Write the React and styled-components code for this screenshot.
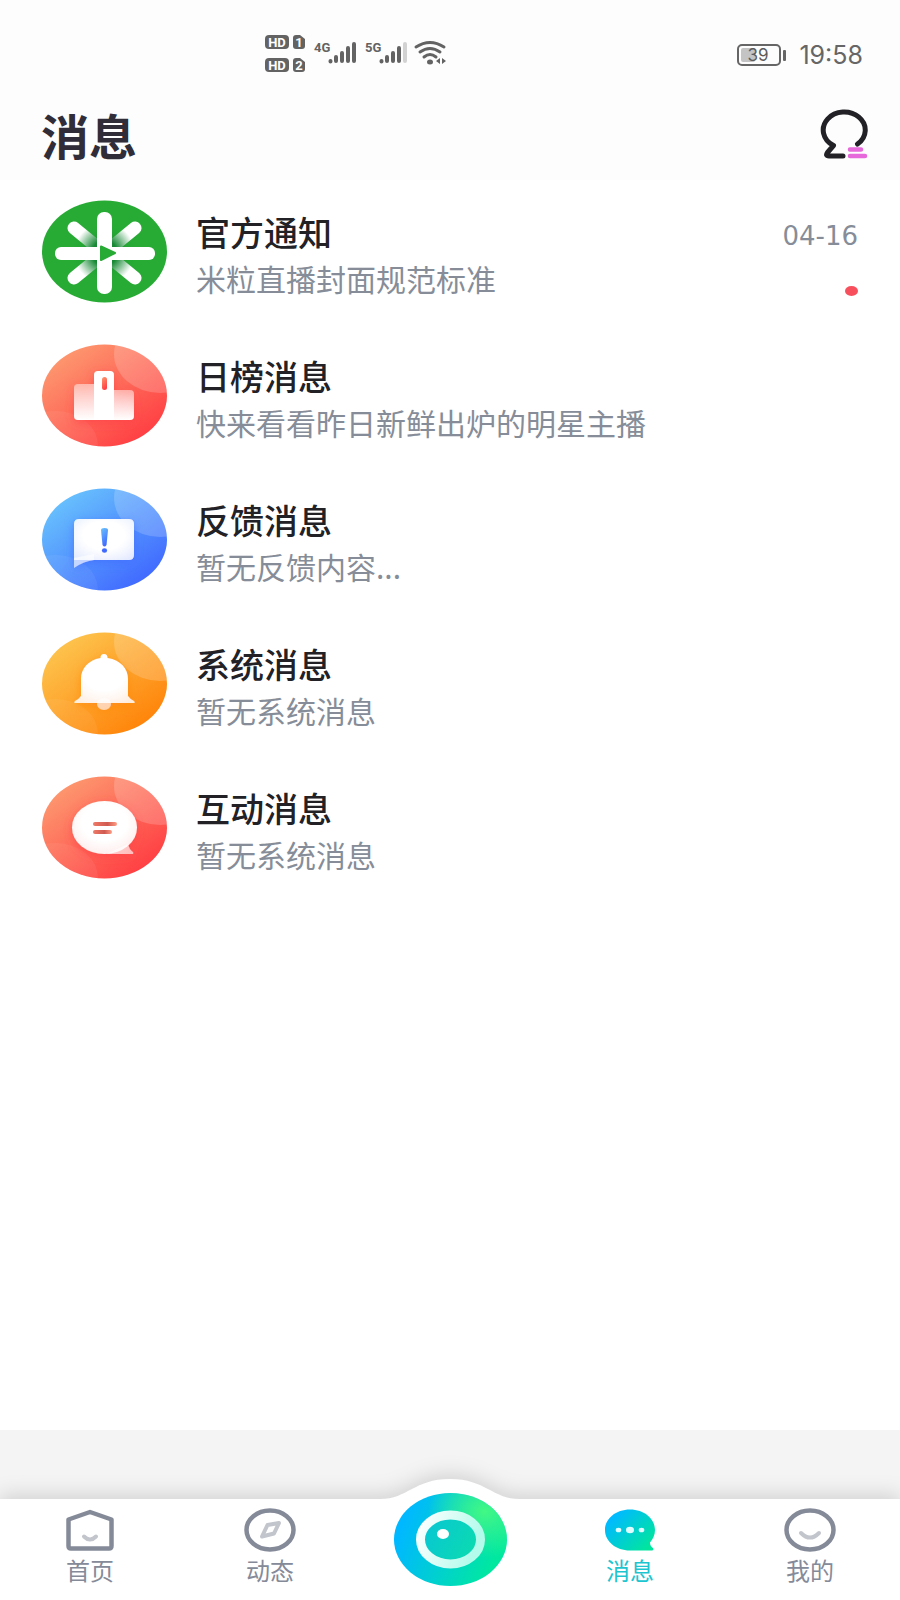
import React from "react";
import styled, { createGlobalStyle } from "styled-components";

export default function App() {
  return (
    <>
      <GlobalStyle />
      <Page>
        <Top>
          <StatusBar>
            <SignalIcons />
            <StatusRight>
              <Battery level={39} />
              <Clock>19:58</Clock>
            </StatusRight>
          </StatusBar>
          <Header>
            <Title>消息</Title>
            <IconButton type="button" aria-label="联系人">
              <ContactIcon />
            </IconButton>
          </Header>
        </Top>
        <List>
          {messages.map((item) => (
            <li key={item.title}>
              <Row href="#">
                <Avatar viewBox="0 0 125 103" aria-hidden="true">
                  {item.icon}
                </Avatar>
                <RowText>
                  <RowTitle>{item.title}</RowTitle>
                  <RowDesc>{item.desc}</RowDesc>
                </RowText>
                {item.date && (
                  <RowMeta>
                    <RowDate>{item.date}</RowDate>
                    <UnreadDot />
                  </RowMeta>
                )}
              </Row>
            </li>
          ))}
        </List>
        <Strip />
        <TabBar>
          <Bump viewBox="0 0 140 21" aria-hidden="true">
            <path d="M0 21V20C28 20 34 0 70 0C106 0 112 20 140 20V21Z" fill="#fff" />
          </Bump>
          <Tab href="#">
            <HomeIcon />
            首页
          </Tab>
          <Tab href="#">
            <CompassIcon />
            动态
          </Tab>
          <LiveButton type="button" aria-label="直播">
            <LiveIcon />
          </LiveButton>
          <Tab href="#" $active aria-current="page">
            <ChatIcon />
            消息
          </Tab>
          <Tab href="#">
            <FaceIcon />
            我的
          </Tab>
        </TabBar>
      </Page>
    </>
  );
}

function SignalIcons() {
  return (
    <Signals viewBox="0 0 186 44" aria-hidden="true">
      <g fill="#636363">
        <rect x="1" y="2" width="24" height="14" rx="4" />
        <path d="M32 2H36L41 6V13Q41 16 38 16H32Q29 16 29 13V5Q29 2 32 2Z" />
        <rect x="1" y="25" width="24" height="14" rx="4" />
        <path d="M32 25H36L41 29V36Q41 39 38 39H32Q29 39 29 36V28Q29 25 32 25Z" />
        <g fontFamily="Roboto, sans-serif" fontWeight="700" fontSize="13">
          <text x="50" y="19">4G</text>
          <text x="101" y="19">5G</text>
        </g>
      </g>
      <g
        fill="#fff"
        fontFamily="Roboto, sans-serif"
        fontWeight="700"
        fontSize="13"
        textAnchor="middle"
      >
        <text x="13" y="14">HD</text>
        <text x="35" y="14">1</text>
        <text x="13" y="37">HD</text>
        <text x="35" y="37">2</text>
      </g>
      <g stroke="#636363" strokeWidth="4" strokeLinecap="round">
        <path d="M66.500 28V28.500M72 24V28M78 20V28M84 15V28M90 11V28" />
        <path d="M117.500 28V28.500M123 24V28M129 20V28M135 15V28" />
        <path d="M141 11V28" stroke="#d2d2d2" />
      </g>
      <g fill="none" stroke="#636363" strokeWidth="3" strokeLinecap="round">
        <path d="M152 14Q166 5 180 14" />
        <path d="M156 19Q166 12 176 19" />
        <path d="M160 24Q166 19 172 24" />
      </g>
      <ellipse cx="166" cy="29" rx="3" ry="2.500" fill="#636363" />
      <path d="M172 28L176 25V31ZM182 28L178 25V31Z" fill="#636363" />
    </Signals>
  );
}

function Battery({ level }) {
  return (
    <BatterySvg viewBox="0 0 50 22" role="img" aria-label={`${level}%`}>
      <rect x="1" y="1" width="42" height="20" rx="4" fill="none" stroke="#666" strokeWidth="2" />
      <rect x="4" y="4" width={(36 * level) / 100} height="14" rx="2" fill="#c4c4c4" />
      <rect x="46" y="6" width="3" height="11" rx="1" fill="#666" />
      <text
        x="21"
        y="17"
        textAnchor="middle"
        fontFamily="Inter, sans-serif"
        fontSize="17"
        fill="#5c5c5c"
      >
        {level}
      </text>
    </BatterySvg>
  );
}

function ContactIcon() {
  return (
    <svg width="50" height="50" viewBox="0 0 50 50" fill="none" strokeLinecap="round">
      <path
        d="M38.500 35A21 18 0 1 0 14.500 36.500L8.500 43.500Q6 47 10 47H24"
        stroke="#222126"
        strokeWidth="5"
        strokeLinejoin="round"
      />
      <path d="M31 40.500H42M31 47H46" stroke="#e668da" strokeWidth="4.500" />
    </svg>
  );
}

// Coloured oval with the two pale bubbles shared by most rows
function Badge({ id, from, to, children }) {
  return (
    <>
      <defs>
        <linearGradient id={`${id}-bg`} x1="0.1" y1="0.1" x2="0.8" y2="0.9">
          <stop offset="0" stopColor={from} />
          <stop offset="1" stopColor={to} />
        </linearGradient>
        <linearGradient id={`${id}-fade`} x1="0" y1="0" x2="0" y2="1">
          <stop offset="0" stopColor="#fff" stopOpacity="0.45" />
          <stop offset="1" stopColor="#fff" />
        </linearGradient>
        <linearGradient id={`${id}-mark`} x1="0" y1="0" x2="0.4" y2="1">
          <stop offset="0" stopColor={from} />
          <stop offset="1" stopColor={to} />
        </linearGradient>
        <radialGradient id={`${id}-glow`} cx="0.5" cy="0.4" r="0.7">
          <stop offset="0.5" stopColor="#fff" />
          <stop offset="1" stopColor="#fff" stopOpacity="0.82" />
        </radialGradient>
        <clipPath id={`${id}-clip`}>
          <ellipse cx="62.500" cy="51.500" rx="62.500" ry="51" />
        </clipPath>
        <filter id={`${id}-shadow`} x="-30%" y="-30%" width="160%" height="160%">
          <feDropShadow dx="0" dy="3" stdDeviation="5" floodColor={to} floodOpacity="0.7" />
        </filter>
      </defs>
      <g clipPath={`url(#${id}-clip)`}>
        <rect width="125" height="103" fill={`url(#${id}-bg)`} />
        <ellipse cx="118" cy="10" rx="46" ry="39" fill="#fff" opacity="0.18" />
        <ellipse cx="14" cy="102" rx="42" ry="35" fill="#fff" opacity="0.06" />
      </g>
      <g filter={`url(#${id}-shadow)`}>{children}</g>
    </>
  );
}

const officialIcon = (
  <>
    <defs>
      <radialGradient id="rice" gradientUnits="userSpaceOnUse" cx="62.500" cy="53" r="42">
        <stop offset="0.3" stopColor="#188a35" />
        <stop offset="0.72" stopColor="#fff" />
      </radialGradient>
      <radialGradient id="rice-shade">
        <stop offset="0.3" stopColor="#107a2a" stopOpacity="0.7" />
        <stop offset="1" stopColor="#27ab35" stopOpacity="0" />
      </radialGradient>
    </defs>
    <ellipse cx="62.500" cy="51.500" rx="62.500" ry="51" fill="#27ab35" />
    <ellipse cx="62.500" cy="53" rx="34" ry="29" fill="url(#rice-shade)" />
    <path
      d="M32 28L93 78M93 28L32 78"
      stroke="url(#rice)"
      strokeWidth="13"
      strokeLinecap="round"
    />
    <rect x="55" y="12" width="15" height="82" rx="7" fill="#fff" />
    <rect x="13" y="47" width="100" height="13" rx="6" fill="#fff" />
    <path
      d="M59 46.500L73 53L59 60Z"
      fill="#27ab35"
      stroke="#27ab35"
      strokeWidth="2"
      strokeLinejoin="round"
    />
  </>
);

const rankIcon = (
  <Badge id="rank" from="#fd9b71" to="#ff4044">
    <path d="M36 40H53V76H36Q32 76 32 72V44Q32 40 36 40Z" fill="url(#rank-fade)" />
    <path d="M71 46H88Q92 46 92 50V72Q92 76 88 76H71Z" fill="url(#rank-fade)" />
    <path d="M56 27H68Q72 27 72 31V76H52V31Q52 27 56 27Z" fill="#fff" />
    <rect x="60" y="33" width="5" height="13" rx="2.500" fill="url(#rank-mark)" />
  </Badge>
);

const feedbackIcon = (
  <Badge id="feedback" from="#69c4fd" to="#416bff">
    <path d="M32 70V80Q42 73 52 72V66Z" fill="#fff" opacity="0.6" />
    <path
      d="M37 31H87Q92 31 92 36V67Q92 72 87 72H32V36Q32 31 37 31Z"
      fill="url(#feedback-glow)"
    />
    <path
      d="M59 42Q59 40 62.500 40Q66 40 66 42L64.500 57Q62.500 60 60.500 57Z"
      fill="url(#feedback-mark)"
    />
    <ellipse cx="62.500" cy="62.500" rx="2.600" ry="2.200" fill="#416bff" />
  </Badge>
);

const systemIcon = (
  <Badge id="system" from="#fdc650" to="#ff850b">
    <ellipse cx="62" cy="72" rx="7" ry="6" fill="#fff" opacity="0.55" />
    <path
      d="M58.500 26Q58.500 22 62 22Q65.500 22 65.500 26C79 28 86 37 86 47V64Q88 67 92 69Q94 71 91 71H34Q31 71 33 69Q37 67 39 64V47C39 37 46 28 58.500 26Z"
      fill="url(#system-glow)"
    />
  </Badge>
);

const interactIcon = (
  <Badge id="interact" from="#fd9b71" to="#ff4044">
    <path d="M86 68Q87 73 91 76Q92 78 90 78H64Z" fill="#fff" opacity="0.6" />
    <ellipse cx="62.500" cy="51.500" rx="32.500" ry="26.500" fill="url(#interact-glow)" />
    <rect x="51" y="46" width="24" height="4" rx="2" fill="url(#interact-line)" />
    <rect x="51" y="54" width="19" height="4" rx="2" fill="url(#interact-line)" />
    <defs>
      <linearGradient id="interact-line">
        <stop offset="0" stopColor="#f07a68" />
        <stop offset="0.6" stopColor="#cf5a50" />
        <stop offset="1" stopColor="#ff9c84" />
      </linearGradient>
    </defs>
  </Badge>
);

const messages = [
  { title: "官方通知", desc: "米粒直播封面规范标准", date: "04-16", icon: officialIcon },
  { title: "日榜消息", desc: "快来看看昨日新鲜出炉的明星主播", icon: rankIcon },
  { title: "反馈消息", desc: "暂无反馈内容...", icon: feedbackIcon },
  { title: "系统消息", desc: "暂无系统消息", icon: systemIcon },
  { title: "互动消息", desc: "暂无系统消息", icon: interactIcon },
];

function HomeIcon() {
  return (
    <TabIcon viewBox="0 0 52 44">
      <path
        d="M4.500 11.500L26 4L47.500 11.500V38Q47.500 40.500 45 40.500H7Q4.500 40.500 4.500 38Z"
        stroke="#858a99"
        strokeWidth="4.500"
        strokeLinejoin="round"
      />
      <path d="M20 28.500Q26 34.500 32 28.500" stroke="#c2c5cc" strokeWidth="4" strokeLinecap="round" />
    </TabIcon>
  );
}

function CompassIcon() {
  return (
    <TabIcon viewBox="0 0 52 44">
      <ellipse cx="26" cy="22" rx="23.500" ry="19.500" stroke="#858a99" strokeWidth="4.500" />
      <path
        d="M23.500 17L35 15L30 25.500L18 28.500Z"
        stroke="#c2c5cc"
        strokeWidth="4"
        strokeLinejoin="round"
      />
    </TabIcon>
  );
}

function ChatIcon() {
  return (
    <TabIcon viewBox="0 0 52 44">
      <defs>
        <linearGradient id="chat-tab" x1="0" y1="0.2" x2="0.9" y2="0.9">
          <stop offset="0.1" stopColor="#00baff" />
          <stop offset="1" stopColor="#00e69c" />
        </linearGradient>
      </defs>
      <path
        d="M26 1.500C40 1.500 51 10.500 51 22C51 27 49 31 46 34.500Q46 38 49 40Q50 42.500 48 42.500H26C12 42.500 1 33.500 1 22C1 10.500 12 1.500 26 1.500Z"
        fill="url(#chat-tab)"
      />
      <ellipse cx="14.500" cy="22" rx="2.800" ry="2.300" fill="#dffcff" />
      <ellipse cx="26" cy="22" rx="4" ry="3.300" fill="#dffcff" />
      <ellipse cx="37.500" cy="22" rx="2.800" ry="2.300" fill="#dffcff" />
    </TabIcon>
  );
}

function FaceIcon() {
  return (
    <TabIcon viewBox="0 0 52 44">
      <ellipse cx="26" cy="22" rx="23.500" ry="19.500" stroke="#858a99" strokeWidth="4.500" />
      <path d="M17 25Q26 34 35 25" stroke="#c2c5cc" strokeWidth="4" strokeLinecap="round" />
    </TabIcon>
  );
}

function LiveIcon() {
  return (
    <svg width="113" height="93" viewBox="0 0 113 93" aria-hidden="true">
      <defs>
        <linearGradient id="live-base" x1="0" y1="0.4" x2="1" y2="0.7">
          <stop offset="0.05" stopColor="#00b8ff" />
          <stop offset="0.9" stopColor="#00e8a0" />
        </linearGradient>
        <radialGradient id="live-green" cx="0.8" cy="0.2" r="0.5">
          <stop offset="0" stopColor="#42f884" />
          <stop offset="1" stopColor="#42f884" stopOpacity="0" />
        </radialGradient>
        <linearGradient id="live-ring" x1="0" y1="0" x2="1" y2="0.3">
          <stop offset="0" stopColor="#fff" />
          <stop offset="1" stopColor="#b5fbec" />
        </linearGradient>
        <linearGradient id="live-lens" x1="0" y1="0.3" x2="1" y2="0.7">
          <stop offset="0" stopColor="#08c6d4" />
          <stop offset="1" stopColor="#0bdcae" />
        </linearGradient>
      </defs>
      <ellipse cx="56.500" cy="46.500" rx="56.500" ry="46.500" fill="url(#live-base)" />
      <ellipse cx="56.500" cy="46.500" rx="56.500" ry="46.500" fill="url(#live-green)" />
      <ellipse
        cx="56.500"
        cy="46.500"
        rx="30"
        ry="24.500"
        fill="url(#live-lens)"
        stroke="url(#live-ring)"
        strokeWidth="9"
      />
      <ellipse cx="49" cy="41" rx="6" ry="5" fill="#fff" />
    </svg>
  );
}

const GlobalStyle = createGlobalStyle`
  * {
    box-sizing: border-box;
  }

  body {
    margin: 0;
    background: #fff;
    font-family: "Noto Sans CJK SC", sans-serif;
  }
`;

const Page = styled.div`
  display: flex;
  flex-direction: column;
  min-height: 100vh;
  overflow: hidden;
`;

const Top = styled.header`
  background: #fdfdfd;
`;

const StatusBar = styled.div`
  display: flex;
  align-items: center;
  justify-content: space-between;
  padding: 32px 37px 0 264px;
  height: 78px;
`;

const Signals = styled.svg`
  width: 186px;
  height: 44px;
`;

const StatusRight = styled.div`
  display: flex;
  align-items: center;
  gap: 12px;
`;

const BatterySvg = styled.svg`
  width: 50px;
  height: 22px;
`;

const Clock = styled.span`
  color: #666;
  font-family: Inter, sans-serif;
  font-size: 25px;
  line-height: 32px;
`;

const Header = styled.div`
  display: flex;
  align-items: center;
  justify-content: space-between;
  height: 102px;
  padding: 10px 31px 0 41px;
`;

const Title = styled.h1`
  margin: 0;
  color: #302d38;
  font-size: 48px;
  font-weight: 700;
  line-height: 60px;
`;

const IconButton = styled.button`
  display: flex;
  padding: 0;
  border: 0;
  background: none;
  cursor: pointer;
`;

const List = styled.ul`
  flex: 1;
  margin: 0;
  padding: 20px 0;
  list-style: none;
`;

const Row = styled.a`
  display: flex;
  align-items: flex-start;
  height: 144px;
  padding: 0 42px;
  text-decoration: none;
`;

const Avatar = styled.svg`
  flex: none;
  width: 125px;
  height: 103px;
`;

const RowText = styled.div`
  flex: 1;
  min-width: 0;
  margin-left: 29px;
  padding-top: 8px;
`;

const RowTitle = styled.div`
  color: #222126;
  font-size: 34px;
  font-weight: 500;
  line-height: 48px;
`;

const RowDesc = styled.div`
  color: #868d98;
  font-size: 30px;
  line-height: 44px;
`;

const RowMeta = styled.div`
  display: flex;
  flex-direction: column;
  align-items: flex-end;
  gap: 26px;
  padding-top: 12px;
`;

const RowDate = styled.time`
  color: #868d98;
  font-family: "DejaVu Sans", sans-serif;
  font-size: 26px;
  line-height: 48px;
`;

const UnreadDot = styled.span`
  width: 13px;
  height: 10px;
  border-radius: 50%;
  background: #f84f5c;
`;

const Strip = styled.div`
  height: 69px;
  background: #f4f4f4;
`;

const TabBar = styled.nav`
  position: relative;
  display: grid;
  grid-template-columns: repeat(5, 1fr);
  height: 101px;
  background: #fff;
  filter: drop-shadow(0 -4px 10px rgba(0, 0, 0, 0.14));
`;

const Bump = styled.svg`
  position: absolute;
  top: -20px;
  left: 50%;
  width: 140px;
  height: 21px;
  margin-left: -70px;
`;

const Tab = styled.a`
  display: flex;
  flex-direction: column;
  align-items: center;
  gap: 4px;
  padding-top: 9px;
  color: ${(props) => (props.$active ? "#1cc5cf" : "#858a99")};
  font-size: 24px;
  line-height: 28px;
  text-decoration: none;
`;

const TabIcon = styled.svg`
  width: 52px;
  height: 44px;
  fill: none;
`;

// The live button rises out of the bar into the bump
const LiveButton = styled.button`
  position: relative;
  display: flex;
  align-items: flex-start;
  justify-content: center;
  margin-top: -6px;
  padding: 0;
  border: 0;
  background: none;
  cursor: pointer;

  svg {
    flex: none;
  }
`;
